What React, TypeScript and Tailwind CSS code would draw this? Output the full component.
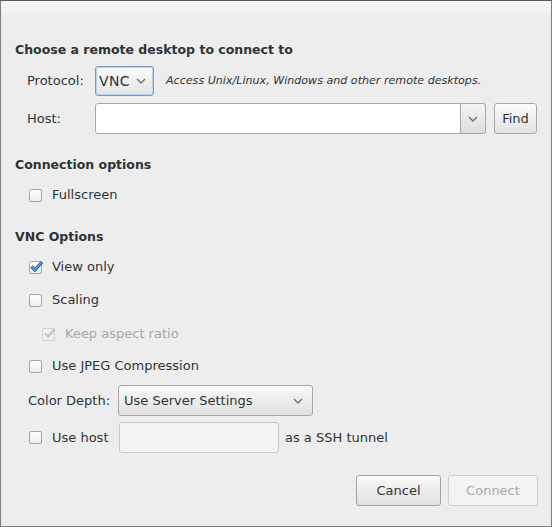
import React from "react"

const font = { fontFamily: '"DejaVu Sans", "Open Sans", sans-serif' }

function Chevron({ className = "" }: { className?: string }) {
  return (
    <svg width="10" height="6" viewBox="0 0 10 6" className={className}>
      <path d="M1 1 L5 5 L9 1" fill="none" stroke="#6d6d6d" strokeWidth="1.3" />
    </svg>
  )
}

function Check({ checked = false, disabled = false }: { checked?: boolean; disabled?: boolean }) {
  return (
    <span
      className={`relative inline-block w-[13px] h-[13px] rounded-[2px] border ${
        disabled ? "border-[#d2d2d2] bg-[#f0f0f0]" : "border-[#a5a5a5] bg-gradient-to-b from-[#ffffff] to-[#ececec]"
      }`}
    >
      {checked && (
        <svg width="16" height="14" viewBox="0 0 16 14" className="absolute left-[-1px] top-[-3px]">
          {disabled ? (
            <path d="M3 7.5 L6 10.5 L12.5 3" fill="none" stroke="#c4c4c4" strokeWidth="2.4" />
          ) : (
            <>
              <path d="M2.5 7.5 L6 11 L13 3" fill="none" stroke="#1f4f8a" strokeWidth="3.2" strokeLinejoin="round" />
              <path d="M2.5 7.5 L6 11 L13 3" fill="none" stroke="#5e9be0" strokeWidth="1.8" strokeLinejoin="round" />
            </>
          )}
        </svg>
      )}
    </span>
  )
}

function CheckRow({
  label,
  checked,
  disabled,
  className = "",
}: {
  label: string
  checked?: boolean
  disabled?: boolean
  className?: string
}) {
  return (
    <div className={`flex items-center h-[20px] ${className}`}>
      <Check checked={checked} disabled={disabled} />
      <span className={`ml-[10px] ${disabled ? "text-[#a8a8a8]" : "text-[#2e3436]"}`}>{label}</span>
    </div>
  )
}

export default function App() {
  return (
    <div
      style={font}
      className="w-[552px] h-[527px] border border-[#7c7c7c] border-t-[#585858] bg-[linear-gradient(to_bottom,#f7f7f7_0px,#ededed_18px)] text-[13px] text-[#2e3436] flex flex-col pl-[14px] pr-[13px] pt-[40px] overflow-hidden"
    >
      <div className="h-[18px] leading-[18px] font-bold text-[12.5px]">Choose a remote desktop to connect to</div>

      {/* protocol */}
      <div className="flex items-center h-[30px] mt-[7px] pl-[12px]">
        <span className="w-[68px]">Protocol:</span>
        <div className="flex items-center justify-between w-[59px] h-[30px] rounded-[3px] border border-[#7d98bd] shadow-[inset_0_0_0_1px_#b9d2f0] bg-gradient-to-b from-[#fbfbfb] to-[#e3e3e3] pl-[3px] pr-[7px] text-[14px]">
          <span className="tracking-[0.3px]">VNC</span>
          <Chevron />
        </div>
        <span className="ml-[12px] italic text-[11.1px]">Access Unix/Linux, Windows and other remote desktops.</span>
      </div>

      {/* host */}
      <div className="flex items-center h-[31px] mt-[7px] pl-[12px]">
        <span className="w-[68px]">Host:</span>
        <div className="w-[366px] h-[31px] bg-white border border-[#a7a7a7] rounded-l-[3px]" />
        <div className="flex items-center justify-center w-[25px] h-[31px] border border-l-0 border-[#a7a7a7] rounded-r-[3px] bg-gradient-to-b from-[#f4f4f4] to-[#dedede]">
          <Chevron />
        </div>
        <button className="ml-[8px] w-[43px] h-[31px] rounded-[3px] border border-[#a7a7a7] bg-gradient-to-b from-[#fbfbfb] to-[#e2e2e2]">
          Find
        </button>
      </div>

      <div className="h-[18px] leading-[18px] font-bold text-[12.5px] mt-[22px]">Connection options</div>
      <CheckRow label="Fullscreen" className="mt-[11px] pl-[14px]" />

      <div className="h-[18px] leading-[18px] font-bold text-[12.5px] mt-[23px]">VNC Options</div>
      <CheckRow label="View only" checked className="mt-[11px] pl-[14px]" />
      <CheckRow label="Scaling" className="mt-[13px] pl-[14px]" />
      <CheckRow label="Keep aspect ratio" checked disabled className="mt-[14px] pl-[27px]" />
      <CheckRow label="Use JPEG Compression" className="mt-[12px] pl-[14px]" />

      {/* color depth */}
      <div className="flex items-center h-[31px] mt-[9px] pl-[13px]">
        <span className="w-[90px]">Color Depth:</span>
        <div className="flex items-center justify-between w-[195px] h-[31px] rounded-[3px] border border-[#a7a7a7] bg-gradient-to-b from-[#f8f8f8] to-[#e1e1e1] pl-[5px] pr-[9px]">
          <span>Use Server Settings</span>
          <Chevron />
        </div>
      </div>

      {/* ssh tunnel */}
      <div className="flex items-center h-[31px] mt-[6px] pl-[14px]">
        <Check />
        <span className="ml-[10px] w-[67px]">Use host</span>
        <div className="w-[160px] h-[31px] rounded-[3px] border border-[#c7c7c7] bg-[#f3f3f3]" />
        <span className="ml-[6px]">as a SSH tunnel</span>
      </div>

      {/* buttons */}
      <div className="flex justify-end gap-[7px] mt-[22px]">
        <button className="w-[85px] h-[31px] rounded-[3px] border border-[#a3a3a3] bg-gradient-to-b from-[#fafafa] to-[#e0e0e0] text-[#2e3436]">
          Cancel
        </button>
        <button className="w-[90px] h-[31px] rounded-[3px] border border-[#cdcdcd] bg-[#f3f3f3] text-[#a9a9a9]">
          Connect
        </button>
      </div>
    </div>
  )
}
